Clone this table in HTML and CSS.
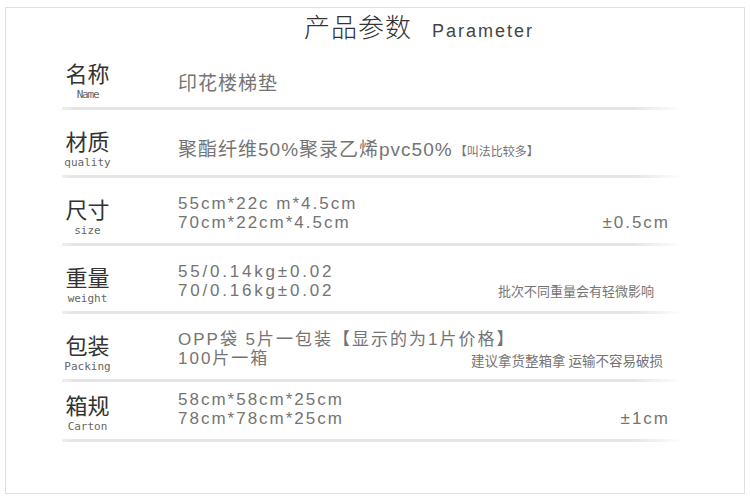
FILE: index.html
```html
<!DOCTYPE html>
<html lang="zh-CN">
<head>
<meta charset="utf-8">
<title>产品参数</title>
<link rel="stylesheet" href="styles.css">
</head>
<body>
<div class="frame">
  <div class="title">
    <span class="title-cn">产品参数</span>
    <span class="title-en">Parameter</span>
  </div>
  <div class="rows">
    <div class="row">
      <div class="label"><div class="label-cn">名称</div><div class="label-en label-en--name">Name</div></div>
      <div class="value">
        <div class="line cn">印花楼梯垫</div>
      </div>
    </div>
    <div class="row">
      <div class="label"><div class="label-cn">材质</div><div class="label-en">quality</div></div>
      <div class="value">
        <div class="line cn">聚酯纤维50%聚录乙烯pvc50%<span class="tiny">【叫法比较多】</span></div>
      </div>
    </div>
    <div class="row">
      <div class="label"><div class="label-cn">尺寸</div><div class="label-en">size</div></div>
      <div class="value value--two">
        <div class="line">55cm*22c m*4.5cm</div>
        <div class="line"><span>70cm*22cm*4.5cm</span><span class="tol">±0.5cm</span></div>
      </div>
    </div>
    <div class="row">
      <div class="label"><div class="label-cn">重量</div><div class="label-en">weight</div></div>
      <div class="value value--two">
        <div class="line wide">55/0.14kg±0.02</div>
        <div class="line"><span class="wide">70/0.16kg±0.02</span><span class="note note--weight">批次不同重量会有轻微影响</span></div>
      </div>
    </div>
    <div class="row">
      <div class="label"><div class="label-cn">包装</div><div class="label-en">Packing</div></div>
      <div class="value value--two">
        <div class="line">OPP袋 5片一包装【显示的为1片价格】</div>
        <div class="line"><span>100片一箱</span><span class="note note--pack">建议拿货整箱拿 运输不容易破损</span></div>
      </div>
    </div>
    <div class="row row--last">
      <div class="label"><div class="label-cn">箱规</div><div class="label-en">Carton</div></div>
      <div class="value value--two">
        <div class="line">58cm*58cm*25cm</div>
        <div class="line"><span>78cm*78cm*25cm</span><span class="tol">±1cm</span></div>
      </div>
    </div>
  </div>
</div>
</body>
</html>
```

FILE: styles.css
```css
html, body {
  margin: 0;
  padding: 0;
  background: #fff;
}
body {
  font-family: "Liberation Sans", "Noto Sans CJK SC", sans-serif;
  color: #666;
}
.frame {
  margin: 7px 0 0 5px;
  width: 738px;
  height: 485px;
  border: 1px solid #e0e0e0;
}
.title {
  display: flex;
  justify-content: center;
  align-items: baseline;
  padding: 4px 0 0 88px;
  height: 30px;
  line-height: 28px;
}
.title-cn {
  font-family: "Noto Sans CJK SC", sans-serif;
  font-weight: 300;
  font-size: 26px;
  color: #333;
  letter-spacing: 1px;
}
.title-en {
  margin-left: 20px;
  font-size: 18px;
  color: #444;
  letter-spacing: 2px;
}
.rows {
  margin: 0 61px 0 56px;
}
.row {
  position: relative;
  display: flex;
  align-items: center;
  padding: 23px 15px 6px 0;
  height: 36px;
}
.row--last {
  padding-top: 15px;
}
.row::after {
  content: "";
  position: absolute;
  left: 0;
  right: 0;
  bottom: -3px;
  height: 3px;
  background: linear-gradient(to right, rgba(228,228,228,0.6) 0, #e5e5e5 2%, #e5e5e5 92%, rgba(228,228,228,0) 100%);
}
.row + .row {
  margin-top: 3px;
}
.label {
  width: 51px;
  text-align: center;
  flex: none;
  margin-top: -5px;
}
.label-cn {
  font-family: "Noto Sans CJK SC", sans-serif;
  font-size: 22px;
  line-height: 24px;
  margin-bottom: 5px;
  color: #333;
}
.label-en {
  font-family: "DejaVu Sans Mono", monospace;
  font-size: 11px;
  line-height: 12px;
  color: #666;
}
.label-en--name {
  letter-spacing: -1.2px;
}
.value {
  flex: 1;
  margin-left: 65px;
}
.value--two {
  margin-bottom: 12px;
}
.line {
  display: flex;
  justify-content: space-between;
  align-items: baseline;
  font-family: "Liberation Sans", "Noto Sans CJK SC", sans-serif;
  font-size: 17px;
  line-height: 19px;
  letter-spacing: 2px;
  color: #747474;
}
.line.cn {
  display: block;
  font-size: 19px;
  letter-spacing: 1px;
}
.wide {
  letter-spacing: 2.8px;
}
.tiny {
  font-size: 12px;
  letter-spacing: 0;
  margin-left: 2px;
}
.note {
  font-family: "Noto Sans CJK SC", sans-serif;
  font-size: 13px;
  letter-spacing: 0;
}
.note--weight {
  margin-right: 14px;
}
.note--pack {
  font-size: 13.5px;
  margin-right: 5px;
  position: relative;
  top: 2px;
}
.tol {
  margin-right: -2px;
}
```
